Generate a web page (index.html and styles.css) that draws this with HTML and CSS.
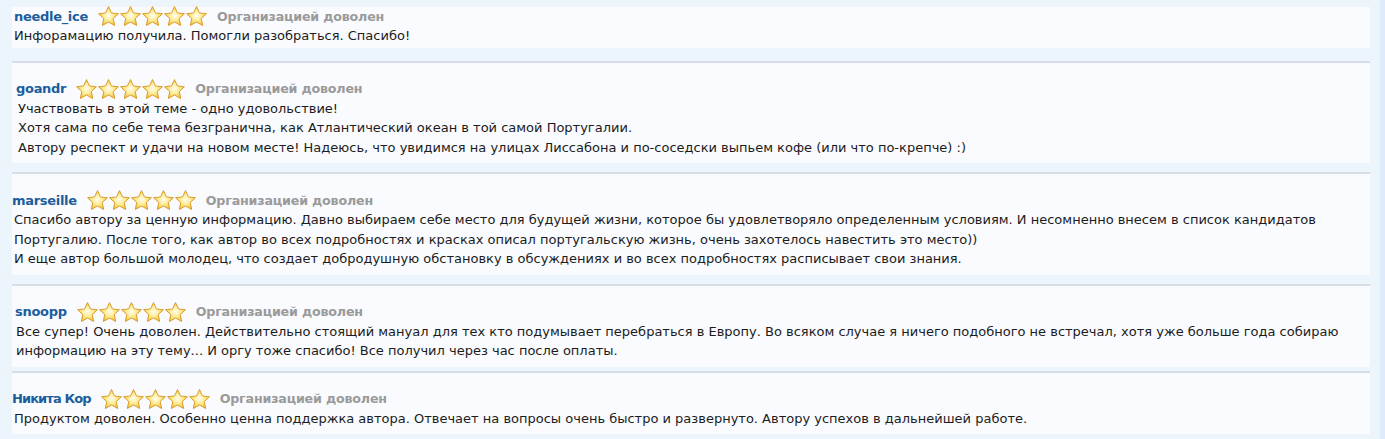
FILE: index.html
```html
<!DOCTYPE html>
<html lang="ru">
<head>
<meta charset="utf-8">
<title>Отзывы</title>
<link rel="stylesheet" href="styles.css">
</head>
<body>
<svg class="defs" aria-hidden="true">
  <defs>
    <radialGradient id="starFill" cx="50%" cy="48%" r="58%">
      <stop offset="0" stop-color="#fffdf0"/>
      <stop offset="0.4" stop-color="#fdeea0"/>
      <stop offset="0.8" stop-color="#f6cd4a"/>
      <stop offset="1" stop-color="#eeb020"/>
    </radialGradient>
    <symbol id="star" viewBox="1 1.2 22 20.6">
      <path d="M12 1.8l3.05 6.55 7.15.85-5.3 4.95 1.45 7.1L12 17.7l-6.35 3.55 1.45-7.1-5.3-4.95 7.15-.85z" fill="url(#starFill)" stroke="#d99a2b" stroke-width="1" stroke-linejoin="round"/>
    </symbol>
  </defs>
</svg>
<div class="page">
  <div class="list">
    <div class="review first">
      <div class="head">
        <span class="name">needle_ice</span>
        <svg class="stars" viewBox="0 0 111 20"><use href="#star" x="0" y="0" width="23" height="20"/><use href="#star" x="22" y="0" width="23" height="20"/><use href="#star" x="44" y="0" width="23" height="20"/><use href="#star" x="66" y="0" width="23" height="20"/><use href="#star" x="88" y="0" width="23" height="20"/></svg>
        <span class="status">Организацией доволен</span>
      </div>
      <div class="text">Инфорамацию получила. Помогли разобраться. Спасибо!</div>
    </div>

    <div class="review r2">
      <div class="head">
        <span class="name">goandr</span>
        <svg class="stars" viewBox="0 0 111 20"><use href="#star" x="0" y="0" width="23" height="20"/><use href="#star" x="22" y="0" width="23" height="20"/><use href="#star" x="44" y="0" width="23" height="20"/><use href="#star" x="66" y="0" width="23" height="20"/><use href="#star" x="88" y="0" width="23" height="20"/></svg>
        <span class="status">Организацией доволен</span>
      </div>
      <div class="text">Участвовать в этой теме - одно удовольствие!<br>Хотя сама по себе тема безгранична, как Атлантический океан в той самой Португалии.<br>Автору респект и удачи на новом месте! Надеюсь, что увидимся на улицах Лиссабона и по-соседски выпьем кофе (или что по-крепче) :)</div>
    </div>

    <div class="review r3">
      <div class="head">
        <span class="name">marseille</span>
        <svg class="stars" viewBox="0 0 111 20"><use href="#star" x="0" y="0" width="23" height="20"/><use href="#star" x="22" y="0" width="23" height="20"/><use href="#star" x="44" y="0" width="23" height="20"/><use href="#star" x="66" y="0" width="23" height="20"/><use href="#star" x="88" y="0" width="23" height="20"/></svg>
        <span class="status">Организацией доволен</span>
      </div>
      <div class="text">Спасибо автору за ценную информацию. Давно выбираем себе место для будущей жизни, которое бы удовлетворяло определенным условиям. И несомненно внесем в список кандидатов Португалию. После того, как автор во всех подробностях и красках описал португальскую жизнь, очень захотелось навестить это место))<br>И еще автор большой молодец, что создает добродушную обстановку в обсуждениях и во всех подробностях расписывает свои знания.</div>
    </div>

    <div class="review r4">
      <div class="head">
        <span class="name">snoopp</span>
        <svg class="stars" viewBox="0 0 111 20"><use href="#star" x="0" y="0" width="23" height="20"/><use href="#star" x="22" y="0" width="23" height="20"/><use href="#star" x="44" y="0" width="23" height="20"/><use href="#star" x="66" y="0" width="23" height="20"/><use href="#star" x="88" y="0" width="23" height="20"/></svg>
        <span class="status">Организацией доволен</span>
      </div>
      <div class="text">Все супер! Очень доволен. Действительно стоящий мануал для тех кто подумывает перебраться в Европу. Во всяком случае я ничего подобного не встречал, хотя уже больше года собираю информацию на эту тему... И оргу тоже спасибо! Все получил через час после оплаты.</div>
    </div>

    <div class="review r5">
      <div class="head">
        <span class="name">Никита Кор</span>
        <svg class="stars" viewBox="0 0 111 20"><use href="#star" x="0" y="0" width="23" height="20"/><use href="#star" x="22" y="0" width="23" height="20"/><use href="#star" x="44" y="0" width="23" height="20"/><use href="#star" x="66" y="0" width="23" height="20"/><use href="#star" x="88" y="0" width="23" height="20"/></svg>
        <span class="status">Организацией доволен</span>
      </div>
      <div class="text">Продуктом доволен. Особенно ценна поддержка автора. Отвечает на вопросы очень быстро и развернуто. Автору успехов в дальнейшей работе.</div>
    </div>
  </div>
</div>
</body>
</html>
```

FILE: styles.css
```css
html, body {
  margin: 0;
  padding: 0;
  background: #edf5fc;
}

.defs {
  display: block;
  width: 0;
  height: 0;
  overflow: hidden;
}

.page {
  box-sizing: border-box;
  width: 1385px;
  min-height: 439px;
  padding: 7px 10px 0 12px;
  border-right: 5px solid #dfebf8;
}

.list {
  display: flex;
  flex-direction: column;
}

.review {
  background: #f9fbfe;
  border-top: 2px solid #d5dde6;
  padding: 17px 4px 6px 2px;
  margin-top: 9px;
  font-family: "DejaVu Sans", Verdana, sans-serif;
}

.review.first {
  border-top: 0;
  margin-top: 0;
  padding-top: 0;
  padding-bottom: 2px;
  margin-bottom: 4px;
}

.head {
  display: flex;
  align-items: center;
  gap: 9px;
  height: 18px;
  margin-bottom: 1px;
}

.name {
  font-weight: bold;
  font-size: 13px;
  color: #1b5e9d;
  letter-spacing: -0.3px;
}

.stars {
  width: 111px;
  height: 20px;
  flex: none;
}

.status {
  font-weight: bold;
  font-size: 12.7px;
  color: #9a9a9a;
  letter-spacing: -0.2px;
}

.text {
  font-size: 13px;
  line-height: 19.5px;
  color: #1c1c1c;
}

.r2 .head { padding-left: 2px; }
.r2 .text { padding-left: 4px; }
.r3 .head { margin-left: -2px; }
.r4 .head { padding-left: 1px; }
.r4 .text { padding-left: 2px; }
.r5 { margin-top: 4px; }
.r5 .head { margin-left: -2px; }
.r5 .name { letter-spacing: -0.9px; }
```
